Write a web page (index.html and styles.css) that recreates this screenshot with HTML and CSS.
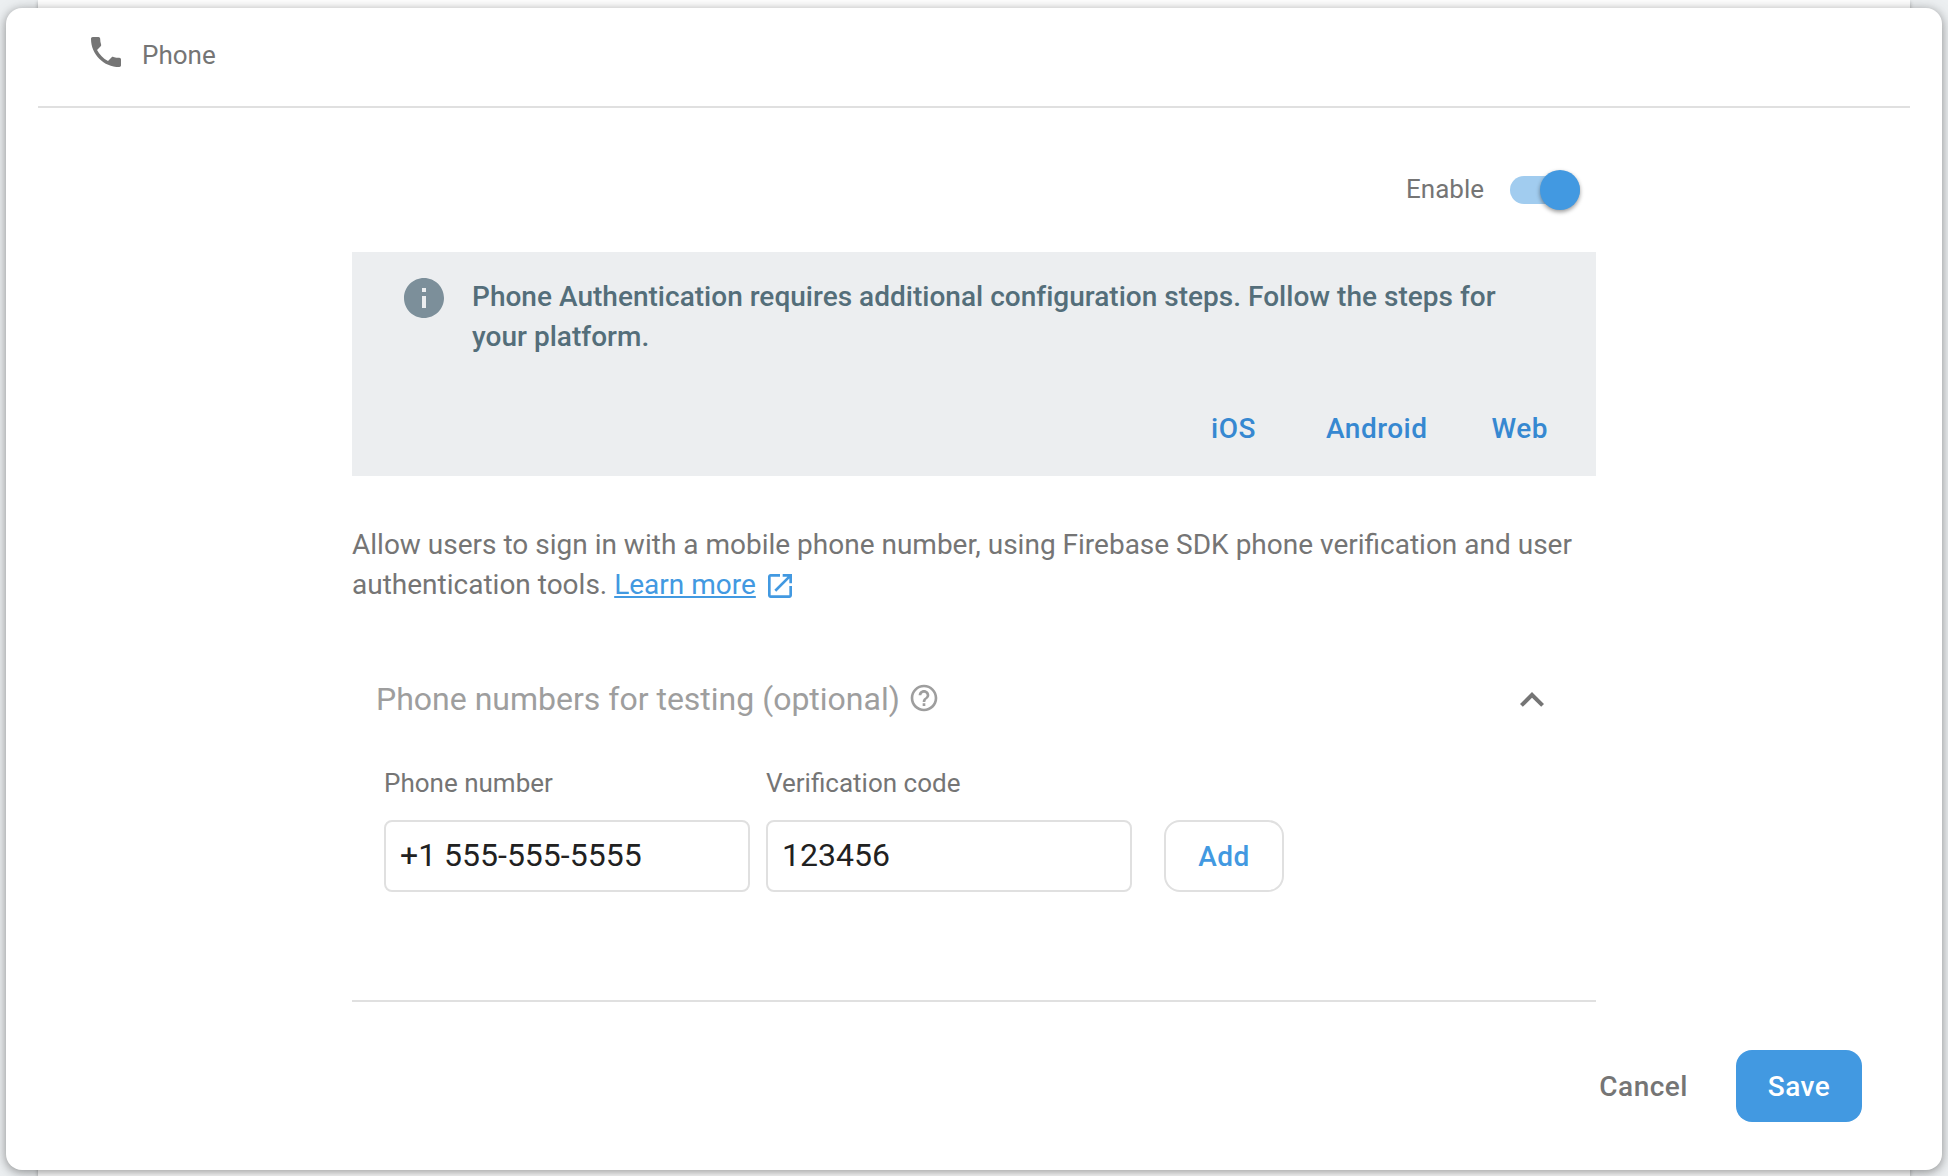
FILE: index.html
```html
<!DOCTYPE html>
<html lang="en">
<head>
<meta charset="utf-8">
<title>Phone sign-in provider</title>
<link rel="stylesheet" href="styles.css">
</head>
<body>
<div class="backdrop">
<main class="dialog">
  <header class="dialog-header">
    <svg class="phone-icon" viewBox="0 0 24 24"><path d="M6.62 10.79c1.44 2.83 3.76 5.14 6.59 6.59l2.2-2.2c.27-.27.67-.36 1.02-.24 1.12.37 2.33.57 3.57.57.55 0 1 .45 1 1V20c0 .55-.45 1-1 1-9.39 0-17-7.61-17-17 0-.55.45-1 1-1h3.5c.55 0 1 .45 1 1 0 1.25.2 2.45.57 3.57.11.35.03.74-.25 1.02l-2.2 2.2z"/></svg>
    <span class="provider-name">Phone</span>
  </header>
  <section class="content">
    <div class="enable-row">
      <span class="enable-label">Enable</span>
      <span class="toggle"><span class="toggle-knob"></span></span>
    </div>
    <div class="notice">
      <div class="notice-body">
        <svg class="info-icon" viewBox="0 0 24 24"><path d="M12 2C6.48 2 2 6.48 2 12s4.48 10 10 10 10-4.48 10-10S17.52 2 12 2zm1 15h-2v-6h2v6zm0-8h-2V7h2v2z"/></svg>
        <p class="notice-text">Phone Authentication requires additional configuration steps. Follow the steps for<br>your platform.</p>
      </div>
      <nav class="notice-links"><a class="ios-link">iOS</a><a>Android</a><a>Web</a></nav>
    </div>
    <p class="description">Allow users to sign in with a mobile phone number, using Firebase SDK phone verification and user<br>authentication tools. <a class="learn-more">Learn more</a><svg class="external-icon" viewBox="0 0 24 24"><path d="M19 19H5V5h7V3H5c-1.11 0-2 .9-2 2v14c0 1.1.89 2 2 2h14c1.1 0 2-.9 2-2v-7h-2v7zM14 3v2h3.59l-9.83 9.83 1.41 1.41L19 6.41V10h2V3h-7z"/></svg></p>
    <div class="testing-header">
      <h2 class="testing-title">Phone numbers for testing (optional)</h2>
      <svg class="help-icon" viewBox="0 0 24 24"><path d="M11 18h2v-2h-2v2zm1-16C6.48 2 2 6.48 2 12s4.480 10 10 10 10-4.480 10-10S17.520 2 12 2zm0 18c-4.410 0-8-3.590-8-8s3.590-8 8-8 8 3.590 8 8-3.590 8-8 8zm0-14c-2.210 0-4 1.790-4 4h2c0-1.100.9-2 2-2s2 .9 2 2c0 2-3 1.750-3 5h2c0-2.250 3-2.500 3-5 0-2.210-1.790-4-4-4z"/></svg>
      <svg class="collapse-icon" viewBox="0 0 24 24"><path d="M12 8l-6 6 1.410 1.410L12 10.830l4.590 4.580L18 14z"/></svg>
    </div>
    <div class="number-form">
      <label class="field"><span class="field-label">Phone number</span><span class="field-box">+1 555-555-5555</span></label>
      <label class="field"><span class="field-label">Verification code</span><span class="field-box">123456</span></label>
      <button class="add-button">Add</button>
    </div>
  </section>
  <footer class="actions">
    <button class="cancel-button">Cancel</button>
    <button class="save-button">Save</button>
  </footer>
</main>
</div>
</body>
</html>
```
FILE: styles.css
```css
* { box-sizing: border-box; }
body {
  margin: 0;
  height: 1176px;
  overflow: hidden;
  background: #eceff1;
  color: #757575;
  font-family: Roboto, sans-serif;
  font-size: 28px;
  line-height: 40px;
}
.backdrop {
  width: 1872px;
  height: 1176px;
  margin: 0 auto;
  padding-top: 8px;
  background: #fff;
  box-shadow: 0 2px 4px rgba(0, 0, 0, .3);
}
.dialog {
  width: 1936px;
  height: 1162px;
  margin-left: -32px;
  padding: 0 32px;
  border-radius: 16px;
  background: #fff;
  box-shadow: 0 2px 8px rgba(0, 0, 0, .3), 0 2px 16px rgba(0, 0, 0, .15);
}
.dialog-header {
  display: flex;
  gap: 16px;
  height: 100px;
  padding: 24px 0 0 48px;
  border-bottom: 2px solid #e0e0e0;
}
svg { fill: currentColor; flex: none; }
.phone-icon { width: 40px; height: 40px; }
.provider-name { padding-top: 3px; font-size: 26px; }
.content {
  width: 1244px;
  height: 894px;
  margin: 0 auto;
  border-bottom: 2px solid #e0e0e0;
}
.enable-row {
  display: flex;
  justify-content: flex-end;
  gap: 26px;
  height: 144px;
  padding: 61px 16px 0 0;
  font-size: 26px;
}
.toggle {
  display: flex;
  justify-content: flex-end;
  align-items: center;
  width: 70px;
  height: 28px;
  margin-top: 7px;
  border-radius: 14px;
  background: #a1ccef;
}
.toggle-knob {
  width: 40px;
  height: 40px;
  border-radius: 50%;
  background: #4299e1;
  box-shadow: 0 2px 4px rgba(0, 0, 0, .4);
}
.notice {
  height: 224px;
  padding: 22px 48px 0;
  background: #eceef0;
}
.notice-body { display: flex; gap: 24px; height: 135px; }
.info-icon { width: 48px; height: 48px; color: #7c8f9a; }
p { margin: 0; white-space: nowrap; }
.notice-text { padding-top: 3px; color: #546e7a; font-weight: 500; letter-spacing: .016px; }
.notice-links {
  display: flex;
  justify-content: flex-end;
  gap: 64px;
  color: #3688d1;
  font-weight: 500;
  letter-spacing: .5px;
}
.ios-link { margin-right: 6px; }
.description { height: 152px; padding-top: 49px; }
.learn-more { color: #4299e1; text-decoration: underline; }
.external-icon { width: 32px; height: 32px; margin-left: 8px; color: #4299e1; vertical-align: -8px; }
.testing-header { display: flex; height: 80px; margin-top: 30px; padding: 21px 40px 0 24px; }
.testing-title { margin: 0; color: #9e9e9e; font-size: 32px; font-weight: 400; }
.help-icon { width: 32px; height: 32px; margin: 3px 0 0 8px; color: #9e9e9e; }
.collapse-icon { width: 48px; height: 48px; margin: -3px 0 0 auto; }
.number-form { display: flex; align-items: flex-end; gap: 16px; height: 154px; padding-left: 32px; }
.field { display: flex; flex-direction: column; gap: 17px; width: 366px; font-size: 26px; }
.field-box {
  height: 72px;
  padding: 13px 14px;
  border: 2px solid #e0e0e0;
  border-radius: 8px;
  color: #212121;
  font-size: 32px;
}
button {
  height: 72px;
  padding: 2px 0 0;
  border: 0;
  border-radius: 16px;
  background: none;
  color: inherit;
  font: 500 28px/40px Roboto, sans-serif;
  letter-spacing: .5px;
}
.add-button { width: 120px; margin-left: 16px; border: 2px solid #e0e0e0; color: #4299e1; }
.actions { display: flex; justify-content: flex-end; gap: 16px; padding: 48px 48px 0 0; }
.cancel-button { padding: 2px 32px 0; }
.save-button { width: 126px; background: #4299e1; color: #fff; }
```
